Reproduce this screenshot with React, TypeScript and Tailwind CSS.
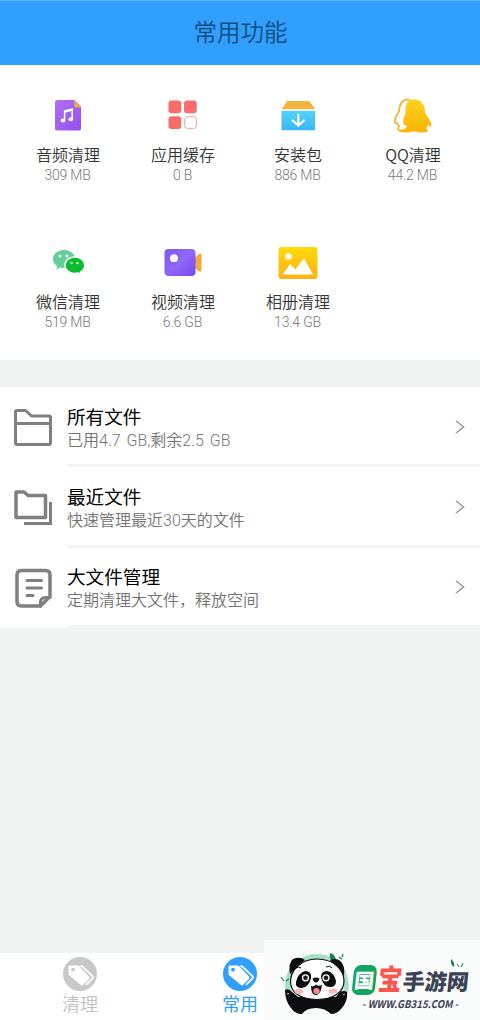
import React from "react";

const AudioIcon = () => (
  <svg width="44" height="44" viewBox="0 0 44 44">
    <defs>
      <linearGradient id="audio" x1="0" y1="0" x2="1" y2="1">
        <stop offset="0" stopColor="#b070ee" />
        <stop offset="1" stopColor="#9450f6" />
      </linearGradient>
    </defs>
    <path d="M11 6H28.500l6.500 6.500v22a2 2 0 0 1-2 2H11a2 2 0 0 1-2-2V8a2 2 0 0 1 2-2z" fill="url(#audio)" />
    <path d="M28 6l7.500 7.500H30a2 2 0 0 1-2-2z" fill="#f0a93c" />
    <path d="M18.600 26.500V17l7.600-1.700v10" fill="none" stroke="#fff" strokeWidth="1.500" />
    <path d="M18.500 17.500l8-1.900" stroke="#fff" strokeWidth="2.500" />
    <ellipse cx="17" cy="26.500" rx="2.300" ry="2" fill="#fff" />
    <ellipse cx="24.800" cy="25.300" rx="2.300" ry="2" fill="#fff" />
  </svg>
);

const CacheIcon = () => (
  <svg width="44" height="44" viewBox="0 0 44 44">
    <g fill="#f86c6b">
      <rect x="7.500" y="6.500" width="12.700" height="12.700" rx="3" />
      <rect x="23" y="6.500" width="12.700" height="12.700" rx="3" />
      <rect x="7.500" y="22.300" width="12.700" height="12.700" rx="3" />
    </g>
    <rect x="23.700" y="22.700" width="11.700" height="11.700" rx="2.500" fill="#fff" stroke="#f39a9a" strokeWidth=".9" />
  </svg>
);

const PackageIcon = () => (
  <svg width="44" height="44" viewBox="0 0 44 44">
    <defs>
      <linearGradient id="box" x1="0" y1="0" x2="0" y2="1">
        <stop offset="0" stopColor="#55d2f7" />
        <stop offset="1" stopColor="#39b6f9" />
      </linearGradient>
    </defs>
    <path d="M11 7h22.500l5.500 8.200H5.700z" fill="#f2b43d" />
    <path d="M5.500 16.700h33.500v19.600H5.500z" fill="url(#box)" />
    <path d="M22.300 20v11.300M16 26l6.300 5.600 6.300-5.600" fill="none" stroke="#fff" strokeWidth="2.200" />
  </svg>
);

const QQIcon = () => (
  <svg width="44" height="44" viewBox="4 0 44 44">
    <defs>
      <linearGradient id="qq" x1="0" y1="0" x2="0" y2="1">
        <stop offset="0" stopColor="#ffd21b" />
        <stop offset="1" stopColor="#fbb407" />
      </linearGradient>
    </defs>
    <path
      d="M23 6c-5-1.500-10 1.500-10.500 8 0 1.500-.2 3-.8 4-2.200 3-4.200 7-3.700 10.500.2 1.500 1 1 2 .4.500 1.500 1.300 2.600 2.200 3.400-1.500 1-2 3.500.3 4.500 2 .9 5.500.8 9 .2"
      fill="#fff"
      stroke="#f6ad22"
      strokeWidth="1.600"
    />
    <path
      d="M27 5.500c6.700 0 10.800 4.700 10.800 11 0 1.800.5 3 1.600 4.400 2.600 3.400 5 6.800 4.800 10.600-.1 2-1.700 1.500-3-.8-.6 1.700-1.300 2.800-2.300 3.800 2.200.8 2.700 3.300-.2 3.800-3.900.6-7.900.2-9.900-.8h-4.500c-2 1.200-5.700 1.300-9 .6-3-.6-2.200-3 0-3.700 3.300 0 4.500-1 4.500-2.700-1.800.8-3.200-1-3.600-2.900-.2-3.500 1-7 2.400-9.200-1-8.500 1.100-14.100 8.400-14.100z"
      fill="url(#qq)"
    />
    <path d="M13.500 31.500q1.500 2.500 5.600.3.500 3.700-4.400 3.800-3-.9-1.200-4.100z" fill="#fff" />
  </svg>
);

const WechatIcon = () => (
  <svg width="44" height="44" viewBox="0 -2.500 44 44">
    <path d="M18 6.500c-6.200 0-11 4-11 9 0 3 1.600 5.500 4.200 7.200L10.300 26l4-2.100c1.200.3 2.400.5 3.700.5 6.200 0 11-4 11-9s-4.800-8.900-11-8.900z" fill="#62ce99" />
    <path d="M28.800 13.500c-5.600 0-9.900 3.600-9.900 8.200s4.300 8.200 9.900 8.200c1.200 0 2.300-.2 3.400-.5l3.600 2-1-3c2.500-1.600 4-4 4-6.700 0-4.600-4.400-8.200-10-8.200z" fill="#08be2f" stroke="#fff" strokeWidth="1.500" />
    <g fill="#fff">
      <circle cx="14" cy="12.500" r="1.500" />
      <circle cx="21" cy="12.500" r="1.500" />
      <circle cx="25.500" cy="19.600" r="1.200" />
      <circle cx="31.500" cy="19.600" r="1.200" />
    </g>
  </svg>
);

const VideoIcon = () => (
  <svg width="44" height="44" viewBox="0.500 -3 44 44">
    <defs>
      <linearGradient id="video" x1="0" y1="0" x2="1" y2="1">
        <stop offset="0" stopColor="#7b5bea" />
        <stop offset=".5" stopColor="#9166f8" />
        <stop offset="1" stopColor="#7747f5" />
      </linearGradient>
    </defs>
    <path d="M33 15l5.500-5H41v17.500h-2.500L33 23z" fill="#f3a93a" />
    <rect x="4" y="5" width="31" height="27" rx="4" fill="url(#video)" />
    <circle cx="13.500" cy="14.200" r="3.900" fill="#fff" />
  </svg>
);

const AlbumIcon = () => (
  <svg width="44" height="44" viewBox="0 -3 44 44">
    <defs>
      <linearGradient id="album" x1="0" y1="0" x2="0" y2="1">
        <stop offset="0" stopColor="#ffda0b" />
        <stop offset="1" stopColor="#fcb116" />
      </linearGradient>
    </defs>
    <rect x="2.500" y="3" width="39" height="32" rx="3" fill="url(#album)" />
    <circle cx="12.500" cy="12.500" r="3.200" fill="#fff" />
    <path d="M6.500 30.500l7.800-10.500 5 5.500L28 14.300l9 16.200z" fill="#fff" />
  </svg>
);

const FolderIcon = () => (
  <svg width="40" height="40" viewBox="0 -1 40 40" fill="none" stroke="#808080" strokeWidth="3">
    <path d="M4 2.500h8.500l6 5.500h17.500q1.500 0 1.500 1.500v25.500q0 1.500-1.500 1.500H4q-1.500 0-1.500-1.500V4q0-1.500 1.500-1.500zM2.500 15.500h35" strokeLinejoin="round" />
  </svg>
);

const RecentIcon = () => (
  <svg width="40" height="40" viewBox="0 0 40 40" fill="none" stroke="#808080" strokeWidth="3">
    <path d="M3 4h8l4 3.500h17.500v22H3z" strokeWidth="3.500" strokeLinejoin="round" />
    <path d="M37.500 14v21.500H11" strokeWidth="3" />
  </svg>
);

const NoteIcon = () => (
  <svg width="40" height="40" viewBox="0 0 40 40" fill="none" stroke="#808080" strokeWidth="3.500" strokeLinecap="round" strokeLinejoin="round">
    <path d="M8.500 2.500h24q4.500 0 4.500 4.500V28.500l-9.500 9.500h-19Q4 38 4 33.500V7Q4 2.500 8.500 2.500z" />
    <path d="M37 29.500h-4.500q-5 0-5 5v3.500" strokeWidth="3" />
    <path d="M14 12.500h14.500M14 20h14.500M14 27.500h6" strokeWidth="3" />
  </svg>
);

const TagIcon = ({ color }: { color: string }) => (
  <svg width="34" height="34" viewBox="0 0 34 34">
    <circle cx="17" cy="17" r="17" fill={color} />
    <path d="M6.500 8.500H14.500q1 0 1.800.8L26 19.500q1.200 1.300 0 2.500l-6 6q-1 .8-2 0L6.500 18.500q-1-1-1-2v-7q0-1 1-1z" fill="#fff" />
    <circle cx="10" cy="12.700" r="1.900" fill={color} />
    <path d="M17.500 9q1.200 0 2 .7l10 9.500q1 1.200 0 2.200l-6.500 6.500" fill="none" stroke="#fff" strokeWidth="1.800" strokeLinejoin="round" />
  </svg>
);

const Arrow = () => (
  <svg width="10" height="14" viewBox="0 0 10 14" fill="none" stroke="#929292" strokeWidth="1.300">
    <path d="M1 1l7.800 6L1 13" />
  </svg>
);

const Panda = () => (
  <svg width="89" height="80" viewBox="0 0 89 80" className="shrink-0">
    <path d="M24 60a32 32 0 1 1 58-1z" fill="#a5dfc6" />
    <path d="M28 58a27 27 0 1 1 50 0z" fill="#d3f0e4" />
    <path d="M66 13q6 2 6 8l-5-1q-2-3-1-7z" fill="#147c55" />
    <path d="M75 17l3 2M79 14l-1 3M17 37l3 4M22 41l3-2" stroke="#147c55" strokeWidth="1.200" />
    <path d="M26 34q-2-11 3-15 7-3 12 1zM66 20q8-3 12 3 4 7 1 14z" fill="#0b0c0e" />
    <path d="M21 50q4-2 7 2l6 5h38l4-5q4-2 7 0 1 10-6 17-4 5-10 5-6-6-15-6-10 0-14 6-7 0-11-6-6-7-6-18z" fill="#0b0c0e" />
    <path d="M23 54q1-1 2 0M79 55l2-1" stroke="#fff" strokeWidth=".8" fill="none" />
    <path d="M53 19c-16 0-26.500 11-26.500 22.500C26.500 53 37 59.500 53 59.500s27-7 27-18.500c0-12-11-22-27-22z" fill="#fff" stroke="#0b0c0e" strokeWidth="1.200" />
    <path d="M32 28q3-2 5 0M62 27q4-2 6 1" stroke="#0b0c0e" strokeWidth="1" fill="none" />
    <path d="M41 31q7 0 6 7-2 9-9 10-7 0-6-6 2-9 9-11zM63 31q-6 0-6 6 2 10 9 10 6 0 6-6-2-9-9-10z" fill="#0b0c0e" />
    <circle cx="41.500" cy="37.800" r="3" fill="#222" stroke="#fff" strokeWidth="1.300" />
    <circle cx="62" cy="37.800" r="3" fill="#222" stroke="#fff" strokeWidth="1.300" />
    <path d="M48.500 38.500q4-2 7 0-1 4-3.500 4t-3.500-4zM47 46q3 1 5-1.500 3 2.500 6 0-1 10.500-6 10.500T47 46z" fill="#151515" />
    <ellipse cx="52.500" cy="51" rx="3.200" ry="3" fill="#f4898d" />
    <ellipse cx="35" cy="51.500" rx="4.500" ry="2.500" fill="#fbb5b5" />
    <ellipse cx="69" cy="51" rx="4.500" ry="2.500" fill="#fbb5b5" />
  </svg>
);

const tools = [
  { name: "音频清理", size: "309 MB", icon: <AudioIcon /> },
  { name: "应用缓存", size: "0 B", icon: <CacheIcon /> },
  { name: "安装包", size: "886 MB", icon: <PackageIcon /> },
  { name: "QQ清理", size: "44.2 MB", icon: <QQIcon /> },
  { name: "微信清理", size: "519 MB", icon: <WechatIcon /> },
  { name: "视频清理", size: "6.6 GB", icon: <VideoIcon /> },
  { name: "相册清理", size: "13.4 GB", icon: <AlbumIcon /> },
];

const files = [
  { title: "所有文件", desc: "已用4.7 GB,剩余2.5 GB", icon: <FolderIcon /> },
  { title: "最近文件", desc: "快速管理最近30天的文件", icon: <RecentIcon /> },
  { title: "大文件管理", desc: "定期清理大文件，释放空间", icon: <NoteIcon /> },
];

const App = () => {
  return (
    <div className="relative flex h-[1020px] w-[480px] flex-col overflow-hidden bg-[#f1f3f3] font-['Noto_Sans_CJK_SC',sans-serif]">
      {/* Header */}
      <header className="flex h-[65px] shrink-0 items-center justify-center border-t border-[#5cb5fb] bg-[#309ffd]">
        <h1 className="pb-0.5 pl-px text-[23.500px] leading-none font-[350] text-[#124c7d]">常用功能</h1>
      </header>

      {/* Tools */}
      <section className="grid h-[295px] shrink-0 grid-cols-4 content-start bg-white px-2.5 pt-[29px]">
        {tools.map((tool) => (
          <div key={tool.name} className="flex h-[147px] flex-col items-center">
            {tool.icon}
            <p className="mt-[5px] pl-px text-base leading-[22px] font-[350] text-[#333]">{tool.name}</p>
            <p className="font-['Roboto','Noto_Sans_CJK_SC',sans-serif] text-sm leading-5 font-light tracking-[-0.2px] text-[#787878]">{tool.size}</p>
          </div>
        ))}
      </section>

      {/* File list */}
      <section className="mt-[27px] shrink-0 bg-white">
        {files.map((file) => (
          <div key={file.title} className="flex h-[80.400px]">
            <div className="flex w-[67px] items-center pl-[13px]">{file.icon}</div>
            <div className="flex flex-1 items-center justify-between border-b-[3px] border-[#f3f4f4] pt-0.5 pr-[15px]">
              <div className="pt-[3px]">
                <h2 className="text-[18.600px] leading-6 text-black">{file.title}</h2>
                <p className="pt-px font-['Roboto','Noto_Sans_CJK_SC',sans-serif] text-base leading-6 font-[350] [word-spacing:2px] text-[#737373]">{file.desc}</p>
              </div>
              <Arrow />
            </div>
          </div>
        ))}
      </section>

      {/* Tab bar */}
      <nav className="mt-auto flex h-[67px] shrink-0 bg-white">
        <div className="flex w-40 flex-col items-center pt-1 text-[#c0c0c0]">
          <TagIcon color="#c8c8c8" />
          <span className="text-lg leading-6 font-[350]">清理</span>
        </div>
        <div className="flex w-40 flex-col items-center pt-1 text-[#309ffd]">
          <TagIcon color="#309ffd" />
          <span className="text-lg leading-6">常用</span>
        </div>
      </nav>

      {/* Site badge */}
      <aside className="absolute right-0 bottom-0 flex h-20 w-[216px] bg-[#fafbfb]">
        <Panda />
        <div className="relative flex flex-col pt-[24px]">
          <svg className="absolute top-[18px] left-[96px]" width="16" height="12" viewBox="0 0 16 12">
            <path d="M2 1q4 3 3 8-4-3-3-8z" fill="#147c55" />
            <path d="M8 6l2 3M14 5l-2 4" stroke="#147c55" />
          </svg>
          <div className="flex h-[31px] -skew-x-6 items-center font-black">
            <span className="mr-0.5 flex h-[30px] w-[23px] items-center justify-center rounded-[7px] bg-[#12a560] text-[20px] leading-none text-white">国</span>
            <span className="mb-[3px] w-[25px] origin-left scale-y-120 text-[24px] leading-none text-[#fa5650]">宝</span>
            <span className="text-[22px] leading-none text-[#3b4254]">手游网</span>
          </div>
          <p className="mt-[3px] ml-[9px] origin-left scale-x-92 text-[10.500px] leading-3 font-bold whitespace-nowrap text-[#3b4254] italic">- WWW.GB315.COM -</p>
        </div>
      </aside>
    </div>
  );
};

export default App;
